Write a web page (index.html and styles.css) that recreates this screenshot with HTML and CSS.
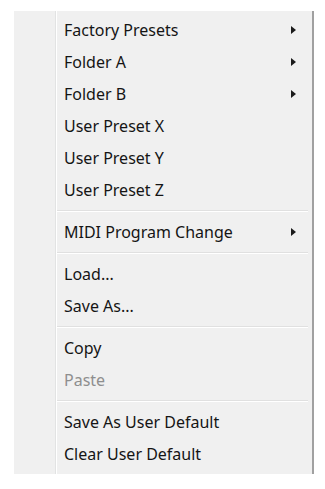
FILE: index.html
```html
<!DOCTYPE html>
<html lang="en">
<head>
  <meta charset="UTF-8" />
  <title>Preset Menu</title>
  <link rel="stylesheet" href="styles.css">
</head>
<body>
  <div class="menu">
    <div class="item sub">Factory Presets</div>
    <div class="item sub">Folder A</div>
    <div class="item sub">Folder B</div>
    <div class="item">User Preset X</div>
    <div class="item">User Preset Y</div>
    <div class="item">User Preset Z</div>
    <div class="sep"></div>
    <div class="item sub">MIDI Program Change</div>
    <div class="sep"></div>
    <div class="item">Load...</div>
    <div class="item">Save As...</div>
    <div class="sep"></div>
    <div class="item">Copy</div>
    <div class="item disabled">Paste</div>
    <div class="sep"></div>
    <div class="item">Save As User Default</div>
    <div class="item">Clear User Default</div>
  </div>
</body>
</html>
```

FILE: styles.css
```css
body {
  margin: 0;
  background-color: #fff;
  font-family: "Noto Sans", "Open Sans", sans-serif;
}
.menu {
  margin: 11px 0 0 14px;
  width: 298px;
  padding: 3px 0 4px;
  background-color: #f0f0f0;
  background-image: linear-gradient(to right,
    transparent 41px, #e2e3e3 41px, #e2e3e3 42px,
    #fff 42px, #fff 43px, transparent 43px);
  border-right: 2px solid #a0a0a0;
}
.item {
  display: flex;
  align-items: center;
  justify-content: space-between;
  height: 32px;
  padding: 0 16px 0 50px;
  font-size: 16px;
  color: #151515;
}
.item.disabled {
  color: #8e8e8e;
}
.item.sub::after {
  content: "";
  border-top: 4px solid transparent;
  border-bottom: 4px solid transparent;
  border-left: 5px solid #1b1b1b;
}
.sep {
  height: 1px;
  margin: 4px 4px 4px 43px;
  background-color: #e0e0e0;
  border-bottom: 1px solid #fff;
}
```
